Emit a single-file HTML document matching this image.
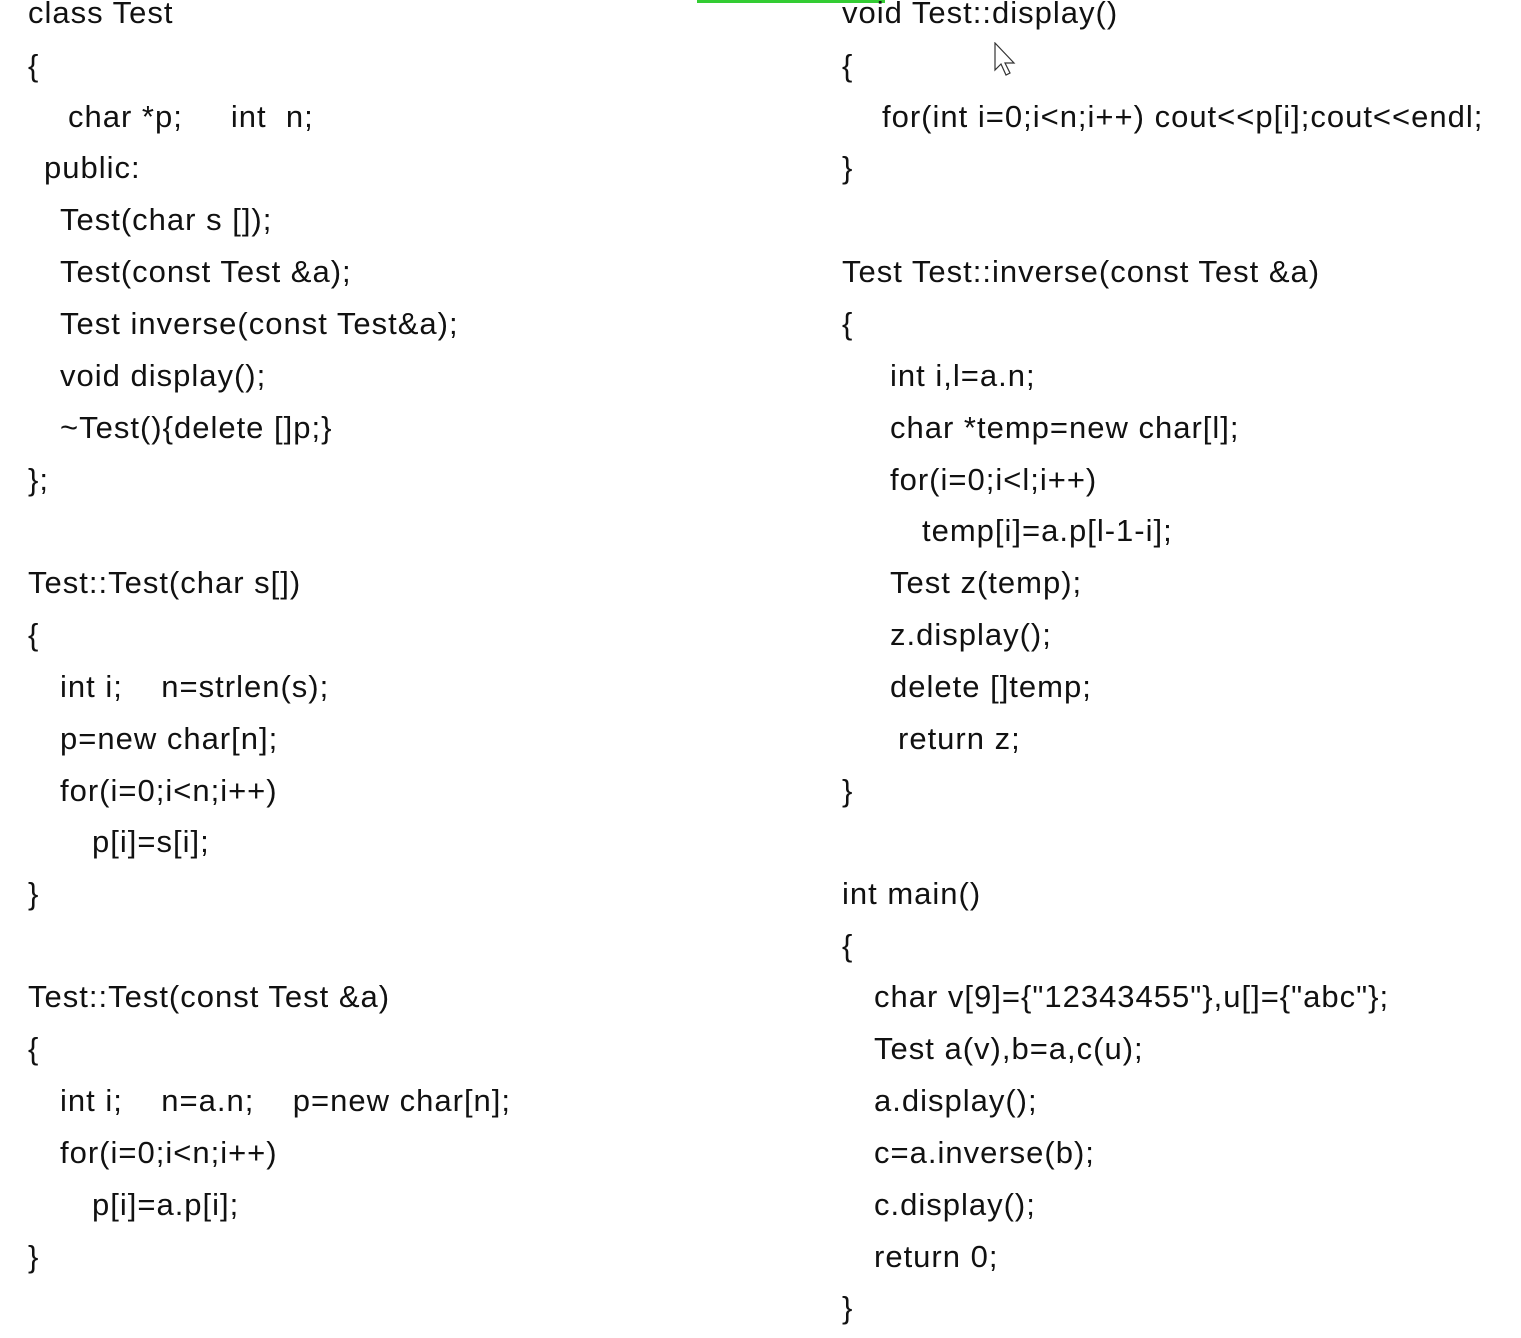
<!DOCTYPE html>
<html><head><meta charset="utf-8"><style>
body{margin:0;width:1521px;height:1338px;background:#fff;position:relative;overflow:hidden;font-family:"Liberation Sans",sans-serif;color:#111;}
.l{position:absolute;white-space:pre;font-size:31px;line-height:36px;letter-spacing:1px;margin-top:1px;}
</style></head><body>
<div style="position:absolute;left:697px;top:0;width:188px;height:3px;background:#3c3"></div>
<svg style="position:absolute;left:994px;top:42px" width="26" height="36" viewBox="0 0 26 36"><path d="M1 1 L1 28 L7 22 L12 33 L16 31 L11 21 L20 21 Z" fill="#fff" stroke="#333" stroke-width="1.2"/></svg>
<div class="l" style="left:28px;top:-6px">class Test</div>
<div class="l" style="left:28px;top:47px">{</div>
<div class="l" style="left:68px;top:98px">char *p;     int  n;</div>
<div class="l" style="left:44px;top:149px">public:</div>
<div class="l" style="left:60px;top:201px">Test(char s []);</div>
<div class="l" style="left:60px;top:253px">Test(const Test &amp;a);</div>
<div class="l" style="left:60px;top:305px">Test inverse(const Test&amp;a);</div>
<div class="l" style="left:60px;top:357px">void display();</div>
<div class="l" style="left:60px;top:409px">~Test(){delete []p;}</div>
<div class="l" style="left:28px;top:461px">};</div>
<div class="l" style="left:28px;top:564px">Test::Test(char s[])</div>
<div class="l" style="left:28px;top:616px">{</div>
<div class="l" style="left:60px;top:668px">int i;    n=strlen(s);</div>
<div class="l" style="left:60px;top:720px">p=new char[n];</div>
<div class="l" style="left:60px;top:772px">for(i=0;i&lt;n;i++)</div>
<div class="l" style="left:92px;top:823px">p[i]=s[i];</div>
<div class="l" style="left:28px;top:875px">}</div>
<div class="l" style="left:28px;top:978px">Test::Test(const Test &amp;a)</div>
<div class="l" style="left:28px;top:1030px">{</div>
<div class="l" style="left:60px;top:1082px">int i;    n=a.n;    p=new char[n];</div>
<div class="l" style="left:60px;top:1134px">for(i=0;i&lt;n;i++)</div>
<div class="l" style="left:92px;top:1186px">p[i]=a.p[i];</div>
<div class="l" style="left:28px;top:1238px">}</div>

<div class="l" style="left:842px;top:-6px">void Test::display()</div>
<div class="l" style="left:842px;top:47px">{</div>
<div class="l" style="left:882px;top:98px">for(int i=0;i&lt;n;i++) cout&lt;&lt;p[i];cout&lt;&lt;endl;</div>
<div class="l" style="left:842px;top:149px">}</div>
<div class="l" style="left:842px;top:253px">Test Test::inverse(const Test &amp;a)</div>
<div class="l" style="left:842px;top:305px">{</div>
<div class="l" style="left:890px;top:357px">int i,l=a.n;</div>
<div class="l" style="left:890px;top:409px">char *temp=new char[l];</div>
<div class="l" style="left:890px;top:461px">for(i=0;i&lt;l;i++)</div>
<div class="l" style="left:922px;top:512px">temp[i]=a.p[l-1-i];</div>
<div class="l" style="left:890px;top:564px">Test z(temp);</div>
<div class="l" style="left:890px;top:616px">z.display();</div>
<div class="l" style="left:890px;top:668px">delete []temp;</div>
<div class="l" style="left:898px;top:720px">return z;</div>
<div class="l" style="left:842px;top:772px">}</div>
<div class="l" style="left:842px;top:875px">int main()</div>
<div class="l" style="left:842px;top:927px">{</div>
<div class="l" style="left:874px;top:978px">char v[9]={"12343455"},u[]={"abc"};</div>
<div class="l" style="left:874px;top:1030px">Test a(v),b=a,c(u);</div>
<div class="l" style="left:874px;top:1082px">a.display();</div>
<div class="l" style="left:874px;top:1134px">c=a.inverse(b);</div>
<div class="l" style="left:874px;top:1186px">c.display();</div>
<div class="l" style="left:874px;top:1238px">return 0;</div>
<div class="l" style="left:842px;top:1289px">}</div>
</body></html>
